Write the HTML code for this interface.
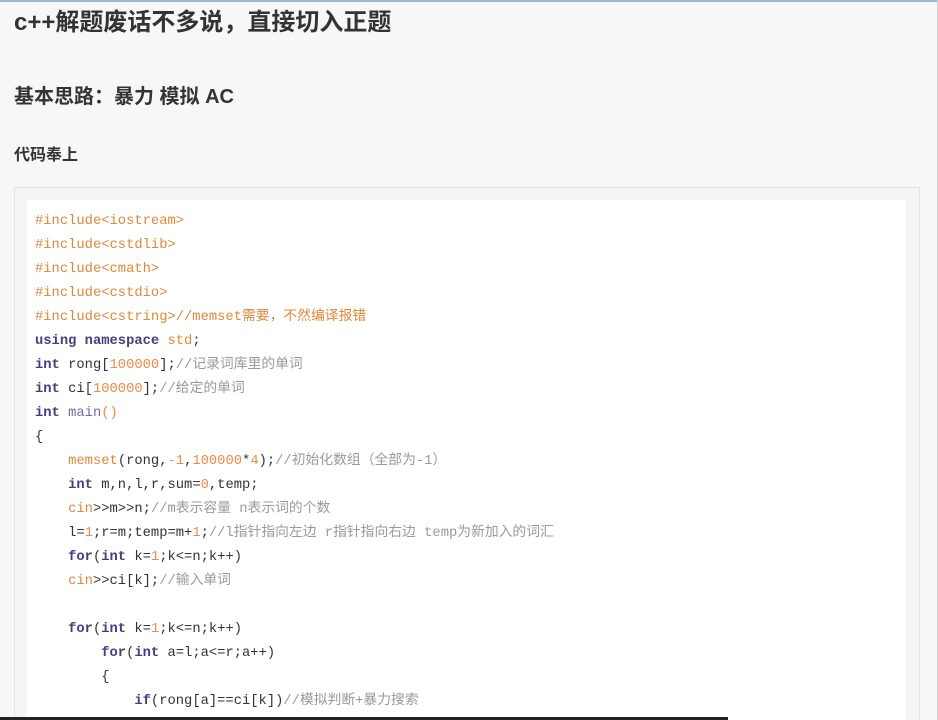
<!DOCTYPE html>
<html><head><meta charset="utf-8"><style>
html,body{margin:0;padding:0;width:938px;height:720px;overflow:hidden;}
body{background:#f7f7f7;position:relative;font-family:"Liberation Sans","Noto Sans CJK SC",sans-serif;color:#333;}
.top{position:absolute;left:0;top:0;width:938px;height:2px;background:#9fb8d0;}
.r{position:absolute;right:0;top:0;width:1px;height:720px;background:#ccc;}
h1{position:absolute;left:14px;top:7px;margin:0;font-size:24px;font-weight:bold;color:#333;line-height:32px;}
h2{position:absolute;left:14px;top:83px;margin:0;font-size:20px;font-weight:bold;line-height:28px;}
h4{position:absolute;left:14px;top:145px;margin:0;font-size:16px;font-weight:bold;line-height:22px;}
.box{position:absolute;left:14px;top:187px;width:904px;height:540px;border:1px solid #e3e3e3;background:#f5f5f5;}
.in{position:absolute;left:27px;top:200px;width:879px;height:530px;background:#fff;}
pre{position:absolute;left:35px;top:210px;margin:0;font-family:"Liberation Mono","Noto Sans CJK SC",monospace;font-size:13.8px;line-height:24px;color:#333;}
.p{color:#e0883a}.k{color:#4a3b7c;font-weight:bold}.n{color:#f08a4b}.c{color:#9a9a9a}.f{color:#7a66a8}
.bot{position:absolute;left:0;top:717px;width:728px;height:3px;background:#222;}
</style></head><body>
<div class="top"></div><div class="r"></div>
<h1>c++解题废话不多说，直接切入正题</h1>
<h2>基本思路：暴力 模拟 AC</h2>
<h4>代码奉上</h4>
<div class="box"></div><div class="in"></div>
<pre><span class="p">#include&lt;iostream&gt;</span>
<span class="p">#include&lt;cstdlib&gt;</span>
<span class="p">#include&lt;cmath&gt;</span>
<span class="p">#include&lt;cstdio&gt;</span>
<span class="p">#include&lt;cstring&gt;//memset需要，不然编译报错</span>
<span class="k">using namespace</span> <span class="p">std</span>;
<span class="k">int</span> rong[<span class="n">100000</span>];<span class="c">//记录词库里的单词</span>
<span class="k">int</span> ci[<span class="n">100000</span>];<span class="c">//给定的单词</span>
<span class="k">int</span> <span class="f">main</span><span class="n">()</span>
{
    <span class="p">memset</span>(rong,<span class="n">-1</span>,<span class="n">100000</span>*<span class="n">4</span>);<span class="c">//初始化数组（全部为-1）</span>
    <span class="k">int</span> m,n,l,r,sum=<span class="n">0</span>,temp;
    <span class="p">cin</span>&gt;&gt;m&gt;&gt;n;<span class="c">//m表示容量 n表示词的个数</span>
    l=<span class="n">1</span>;r=m;temp=m+<span class="n">1</span>;<span class="c">//l指针指向左边 r指针指向右边 temp为新加入的词汇</span>
    <span class="k">for</span>(<span class="k">int</span> k=<span class="n">1</span>;k&lt;=n;k++)
    <span class="p">cin</span>&gt;&gt;ci[k];<span class="c">//输入单词</span>

    <span class="k">for</span>(<span class="k">int</span> k=<span class="n">1</span>;k&lt;=n;k++)
        <span class="k">for</span>(<span class="k">int</span> a=l;a&lt;=r;a++)
        {
            <span class="k">if</span>(rong[a]==ci[k])<span class="c">//模拟判断+暴力搜索</span>
</pre>
<div class="bot"></div>
</body></html>
